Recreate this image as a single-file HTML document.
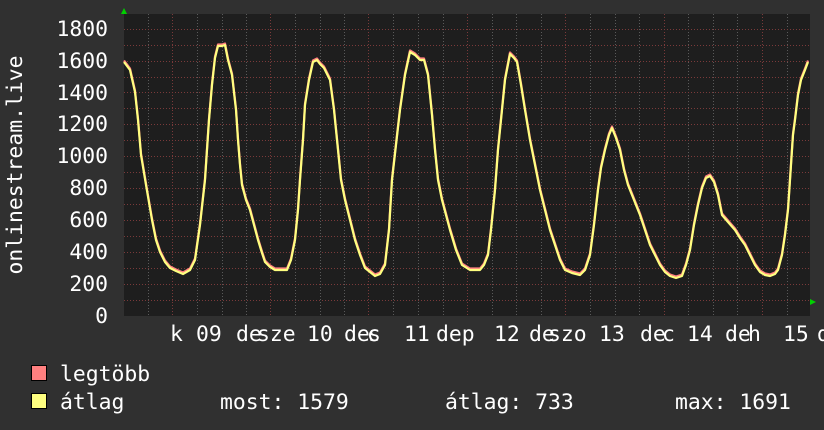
<!DOCTYPE html>
<html><head><meta charset="utf-8"><style>
html,body{margin:0;padding:0;background:#303030;}
svg{display:block}
text{font-family:"DejaVu Sans Mono","Liberation Mono",monospace;fill:#fff;font-size:21.4px}
</style></head><body>
<svg width="824" height="430" viewBox="0 0 824 430" xmlns="http://www.w3.org/2000/svg">
<rect width="824" height="430" fill="#303030"/>
<rect x="124" y="14" width="686" height="302" fill="#1e1e1e"/>
<g stroke="#5a5a5a" stroke-width="1" stroke-dasharray="1,2">
<path d="M148.5 14V316M197.5 14V316M222.5 14V316M246.5 14V316M295.5 14V316M320.5 14V316M344.5 14V316M393.5 14V316M418.5 14V316M443.5 14V316M492.5 14V316M516.5 14V316M541.5 14V316M590.5 14V316M615.5 14V316M639.5 14V316M688.5 14V316M713.5 14V316M737.5 14V316M787.5 14V316"/>
</g>
<g stroke="#7a3a3a" stroke-width="1" stroke-dasharray="1,2">
<path d="M172.5 14V316M270.5 14V316M368.5 14V316M467.5 14V316M565.5 14V316M664.5 14V316M762.5 14V316"/>
<path d="M124 300.5H810M124 284.5H810M124 268.5H810M124 252.5H810M124 236.5H810M124 220.5H810M124 204.5H810M124 188.5H810M124 172.5H810M124 156.5H810M124 140.5H810M124 124.5H810M124 108.5H810M124 92.5H810M124 77.5H810M124 61.5H810M124 45.5H810M124 29.5H810"/>
</g>
<g fill="none" stroke-width="2.2" stroke-linejoin="round">
<polyline stroke="#ff8080" transform="translate(0,-1.5)" points="124,62 130,70 135,92 138,120 141,155 146,185 152,220 156,240 160,252 165,262 170,268 176,271 183,274 190,270 195,260 200,225 205,180 209,120 212,85 215,58 218,46 222,46 225,45 228,60 232,75 236,110 238,140 240,165 242,185 246,200 250,210 254,225 258,240 262,253 265,262 270,267 275,270 287,270 291,260 295,240 298,210 300,180 303,140 305,105 309,80 313,62 317,60 320,64 324,68 330,80 334,110 338,150 341,180 345,200 350,220 355,240 360,255 365,268 370,272 375,276 380,274 385,265 389,230 392,180 396,145 400,110 405,75 410,52 415,55 420,60 424,60 428,75 432,115 435,150 438,180 442,200 446,215 450,230 456,250 462,265 470,270 480,270 484,265 488,255 491,230 495,190 498,150 502,110 505,80 510,54 514,58 517,62 521,85 525,110 530,140 535,165 540,190 545,210 550,230 555,245 560,260 565,270 572,273 580,275 585,270 590,255 594,225 598,190 601,168 605,150 609,135 612,128 616,138 620,150 624,170 628,185 634,200 640,215 645,230 650,245 655,255 660,265 665,272 670,276 676,278 682,276 686,265 690,250 694,225 698,205 702,188 706,178 710,176 714,182 718,195 722,215 728,222 735,230 740,238 745,245 750,255 755,265 760,272 765,275 770,276 775,274 778,270 782,255 785,235 788,210 791,165 793,135 795,120 798,95 801,80 805,70 808,62"/>
<polyline stroke="#ffff80" points="124,62 130,70 135,92 138,120 141,155 146,185 152,220 156,240 160,252 165,262 170,268 176,271 183,274 190,270 195,260 200,225 205,180 209,120 212,85 215,58 218,46 222,46 225,45 228,60 232,75 236,110 238,140 240,165 242,185 246,200 250,210 254,225 258,240 262,253 265,262 270,267 275,270 287,270 291,260 295,240 298,210 300,180 303,140 305,105 309,80 313,62 317,60 320,64 324,68 330,80 334,110 338,150 341,180 345,200 350,220 355,240 360,255 365,268 370,272 375,276 380,274 385,265 389,230 392,180 396,145 400,110 405,75 410,52 415,55 420,60 424,60 428,75 432,115 435,150 438,180 442,200 446,215 450,230 456,250 462,265 470,270 480,270 484,265 488,255 491,230 495,190 498,150 502,110 505,80 510,54 514,58 517,62 521,85 525,110 530,140 535,165 540,190 545,210 550,230 555,245 560,260 565,270 572,273 580,275 585,270 590,255 594,225 598,190 601,168 605,150 609,135 612,128 616,138 620,150 624,170 628,185 634,200 640,215 645,230 650,245 655,255 660,265 665,272 670,276 676,278 682,276 686,265 690,250 694,225 698,205 702,188 706,178 710,176 714,182 718,195 722,215 728,222 735,230 740,238 745,245 750,255 755,265 760,272 765,275 770,276 775,274 778,270 782,255 785,235 788,210 791,165 793,135 795,120 798,95 801,80 805,70 808,62"/>
</g>
<polygon points="121,14 127,14 124,8" fill="#00d000"/>
<polygon points="810,299 810,305 816,302" fill="#00d000"/>
<g text-anchor="end">
<text x="108" y="323">0</text>
<text x="108" y="291">200</text>
<text x="108" y="259">400</text>
<text x="108" y="227">600</text>
<text x="108" y="195">800</text>
<text x="108" y="163">1000</text>
<text x="108" y="131">1200</text>
<text x="108" y="100">1400</text>
<text x="108" y="68">1600</text>
<text x="108" y="36">1800</text>
</g>
<text transform="translate(22,165) rotate(-90)" text-anchor="middle">onlinestream.live</text>
<g>
<text x="170" y="341">k</text>
<text x="196" y="341">09</text>
<text x="236" y="341">de</text>
<text x="257" y="341">sze</text>
<text x="307" y="341">10</text>
<text x="344" y="341">de</text>
<text x="367" y="341">c</text>
<text x="368" y="341">s</text>
<text x="404" y="341">11</text>
<text x="436" y="341">dep</text>
<text x="494" y="341">12</text>
<text x="529" y="341">de</text>
<text x="548" y="341">szo</text>
<text x="599" y="341">13</text>
<text x="640" y="341">de</text>
<text x="662" y="341">c</text>
<text x="687" y="341">14</text>
<text x="725" y="341">de</text>
<text x="748" y="341">h</text>
<text x="783" y="341">15</text>
<text x="817" y="341">d</text>
</g>
<rect x="31.5" y="365.5" width="15" height="15" fill="#ff8080" stroke="#000"/>
<rect x="31.5" y="393.5" width="15" height="15" fill="#ffff80" stroke="#000"/>
<text x="60" y="381">legtöbb</text>
<text x="60" y="409">átlag</text>
<text x="220" y="409">most: 1579</text>
<text x="445" y="409">átlag: 733</text>
<text x="675" y="409">max: 1691</text>
</svg>
</body></html>
